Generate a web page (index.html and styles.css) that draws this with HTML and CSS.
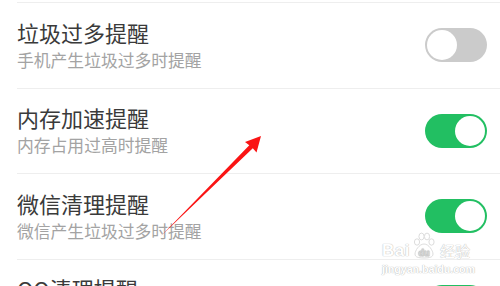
FILE: index.html
```html
<!DOCTYPE html>
<html lang="zh">
<head>
<meta charset="utf-8">
<link rel="stylesheet" href="styles.css">
</head>
<body>
<div class="page">
  <ul class="list">
    <li class="row">
      <div class="text">
        <div class="title">垃圾过多提醒</div>
        <div class="sub">手机产生垃圾过多时提醒</div>
      </div>
      <span class="switch"><span class="knob"></span></span>
    </li>
    <li class="row">
      <div class="text">
        <div class="title">内存加速提醒</div>
        <div class="sub">内存占用过高时提醒</div>
      </div>
      <span class="switch on"><span class="knob"></span></span>
    </li>
    <li class="row">
      <div class="text">
        <div class="title">微信清理提醒</div>
        <div class="sub">微信产生垃圾过多时提醒</div>
      </div>
      <span class="switch on"><span class="knob"></span></span>
    </li>
    <li class="row">
      <div class="text">
        <div class="title">QQ清理提醒</div>
        <div class="sub">QQ产生垃圾过多时提醒</div>
      </div>
      <span class="switch on"><span class="knob"></span></span>
    </li>
  </ul>

  <svg class="arrow" width="500" height="286" viewBox="0 0 500 286">
    <polygon points="161,236 252.8,148.3 256.5,152.5 261,136 245,142 249.3,145.2" fill="#fa1414"/>
  </svg>

  <div class="watermark">
    <div class="wm-line">
      <span class="wm-bai">Bai</span>
      <svg class="paw" width="24" height="27" viewBox="0 0 24 27">
        <g fill="#fff" stroke="#d8d8d8" stroke-width="0.9">
          <ellipse cx="5" cy="10" rx="2.6" ry="3.2"/>
          <ellipse cx="9.5" cy="4.5" rx="2.6" ry="3.4"/>
          <ellipse cx="15" cy="4.5" rx="2.6" ry="3.4"/>
          <ellipse cx="19.5" cy="10" rx="2.6" ry="3.2"/>
          <path d="M12 12 C7 12 3 19 3 22 C3 25 6 26 12 26 C18 26 21 25 21 22 C21 19 17 12 12 12 Z"/>
        </g>
        <text x="12" y="24" text-anchor="middle" class="paw-du">du</text>
      </svg>
      <span class="wm-jy">经验</span>
    </div>
    <div class="wm-url">jingyan.baidu.com</div>
  </div>
</div>
</body>
</html>
```
FILE: styles.css
```css
* { box-sizing: border-box; }
html, body {
  margin: 0;
  padding: 0;
  background: #ffffff;
}
body {
  width: 500px;
  height: 286px;
  overflow: hidden;
  font-family: "Noto Sans CJK SC", "Noto Sans", sans-serif;
}
.page {
  position: relative;
  width: 500px;
  height: 286px;
  overflow: hidden;
  padding-top: 2px;
}
.list {
  list-style: none;
  margin: 0 0 0 17px;
  padding: 0;
}
.row {
  display: flex;
  align-items: center;
  justify-content: space-between;
  height: 85.5px;
  border-top: 1px solid #eeeeee;
  padding-right: 13px;
}
.text {
  display: flex;
  flex-direction: column;
  gap: 5px;
  padding-bottom: 2px;
}
.title {
  font-size: 22px;
  line-height: 26px;
  color: #3a3a3a;
}
.sub {
  font-size: 16.8px;
  line-height: 20px;
  color: #a3a3a3;
}
.switch {
  display: flex;
  align-items: center;
  width: 62px;
  height: 34px;
  border-radius: 17px;
  background: #cbcbcb;
  padding: 2px;
  flex-shrink: 0;
}
.switch .knob {
  width: 30px;
  height: 30px;
  border-radius: 50%;
  background: #ffffff;
}
.switch.on {
  background: #22bf62;
  justify-content: flex-end;
}
.arrow {
  position: absolute;
  left: 0;
  top: 0;
  pointer-events: none;
}
.watermark {
  position: absolute;
  left: 382px;
  top: 231px;
  width: 94px;
  font-family: "Liberation Sans", Arial, sans-serif;
  font-weight: bold;
  color: #ffffff;
  text-shadow: 0 0 1px #bdbdbd, 0 0 1px #bdbdbd;
}
.wm-line {
  display: flex;
  align-items: flex-end;
  height: 28px;
}
.wm-bai {
  font-size: 17px;
  line-height: 17px;
  letter-spacing: 0.5px;
}
.paw {
  margin: 0 4px 0 2px;
}
.paw-du {
  font-family: "Liberation Sans", Arial, sans-serif;
  font-weight: bold;
  font-size: 9px;
  fill: #ffffff;
  stroke: #cfcfcf;
  stroke-width: 0.4;
}
.wm-jy {
  font-family: "Noto Sans CJK SC", sans-serif;
  font-size: 15px;
  line-height: 17px;
  font-weight: normal;
}
.wm-url {
  font-size: 10.8px;
  line-height: 12px;
  margin-top: 4px;
  letter-spacing: -0.1px;
}
```
